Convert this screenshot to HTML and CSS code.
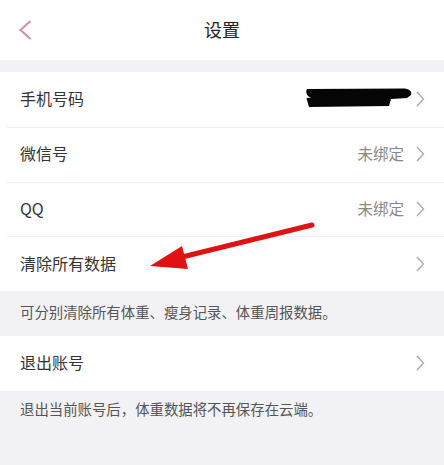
FILE: index.html
```html
<!DOCTYPE html>
<html lang="zh-CN">
<head>
  <meta charset="UTF-8" />
  <meta name="viewport" content="width=device-width, initial-scale=1.0"/>
  <title>设置</title>
  <link rel="stylesheet" href="styles.css">
</head>
<body>
  <header class="topbar">
    <svg class="back" width="14" height="20" viewBox="0 0 14 20">
      <polyline points="11.5,1 1.5,10 11.5,19" fill="none" stroke="#d68ba2" stroke-width="2" stroke-linejoin="miter"/>
    </svg>
    <h1>设置</h1>
  </header>

  <!-- 账号绑定 -->
  <section class="group">
    <div class="row">
      <span class="label">手机号码</span>
      <span class="value">
        <svg class="redact" width="108" height="20" viewBox="0 0 108 20">
          <path d="M2 1 L100 0.5 Q108 2 106 7 L102 10 L86 11 L84 18 L4 19 L2 12 Q0 9 6 10 L3 8 Q0 4 2 1 Z" fill="#050505"/>
        </svg>
      </span>
      <svg class="arrow" width="9" height="16" viewBox="0 0 9 16"><polyline points="1,1 7.5,8 1,15" fill="none" stroke="#aaa" stroke-width="1.4"/></svg>
    </div>
    <div class="row">
      <span class="label">微信号</span>
      <span class="value">未绑定</span>
      <svg class="arrow" width="9" height="16" viewBox="0 0 9 16"><polyline points="1,1 7.5,8 1,15" fill="none" stroke="#aaa" stroke-width="1.4"/></svg>
    </div>
    <div class="row">
      <span class="label">QQ</span>
      <span class="value">未绑定</span>
      <svg class="arrow" width="9" height="16" viewBox="0 0 9 16"><polyline points="1,1 7.5,8 1,15" fill="none" stroke="#aaa" stroke-width="1.4"/></svg>
    </div>
    <div class="row">
      <span class="label">清除所有数据</span>
      <span class="value"></span>
      <svg class="arrow" width="9" height="16" viewBox="0 0 9 16"><polyline points="1,1 7.5,8 1,15" fill="none" stroke="#aaa" stroke-width="1.4"/></svg>
    </div>
  </section>
  <p class="note">可分别清除所有体重、瘦身记录、体重周报数据。</p>

  <section class="group">
    <div class="row">
      <span class="label">退出账号</span>
      <span class="value"></span>
      <svg class="arrow" width="9" height="16" viewBox="0 0 9 16"><polyline points="1,1 7.5,8 1,15" fill="none" stroke="#aaa" stroke-width="1.4"/></svg>
    </div>
  </section>
  <p class="note last">退出当前账号后，体重数据将不再保存在云端。</p>

  <!-- 标注箭头 -->
  <svg class="mark" width="444" height="465" viewBox="0 0 444 465">
    <line x1="312" y1="225" x2="178" y2="258" stroke="#dd1414" stroke-width="5" stroke-linecap="round"/>
    <polygon points="150,266 182,246 188,269" fill="#e01212"/>
  </svg>
</body>
</html>
```

FILE: styles.css
```css
* {
  margin: 0;
  padding: 0;
  box-sizing: border-box;
}

body {
  background: #f2f2f6;
  color: #333;
  font-family: "Noto Sans CJK SC", "Noto Sans", sans-serif;
  width: 444px;
  min-height: 465px;
  position: relative;
}

.topbar {
  height: 60px;
  background: #fff;
  display: flex;
  align-items: center;
  justify-content: center;
  position: relative;
  margin-bottom: 12px;
  padding-bottom: 2px;
}

.topbar h1 {
  font-size: 18px;
  font-weight: normal;
  color: #222;
}

.back {
  position: absolute;
  left: 19px;
  top: 20px;
}

.group {
  background: #fff;
}

.row {
  height: 54.75px;
  display: flex;
  align-items: center;
  padding: 0 19px 2px 20px;
  position: relative;
}

.row + .row::before {
  content: "";
  position: absolute;
  left: 7px;
  right: 0;
  top: 0;
  height: 1px;
  background: #efeff2;
}

.label {
  font-size: 16px;
  color: #333;
  flex: 1;
}

.value {
  font-size: 15.5px;
  color: #888;
  margin-right: 12px;
  display: flex;
  align-items: center;
}

.redact {
  margin-right: -9px;
  margin-top: 0;
}

.arrow {
  margin-top: 2px;
}

.note {
  font-size: 14.4px;
  color: #555;
  padding: 0 20px 3px;
  height: 45px;
  line-height: 42px;
}

.note.last {
  height: 36px;
  line-height: 36px;
}

.mark {
  position: absolute;
  left: 0;
  top: 0;
  pointer-events: none;
}
```
